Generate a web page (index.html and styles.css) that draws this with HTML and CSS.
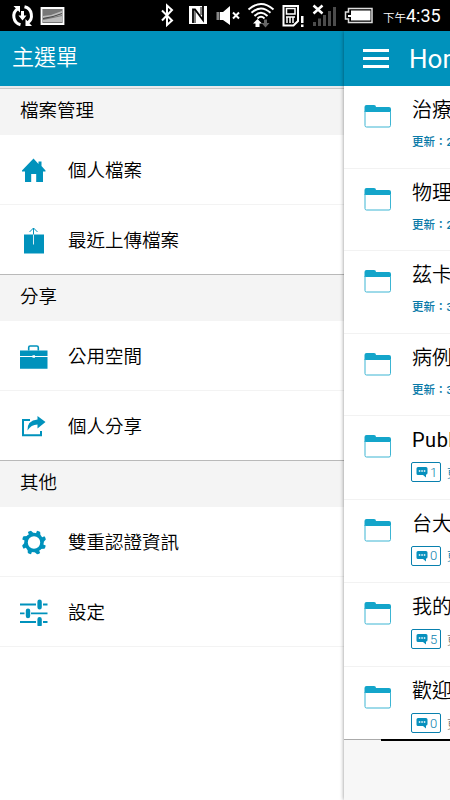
FILE: index.html
```
<!DOCTYPE html>
<html lang="zh-Hant">
<head>
  <meta charset="UTF-8">
  <meta name="viewport" content="width=device-width, initial-scale=1.0">
  <title>主選單</title>
  <link rel="stylesheet" href="styles.css">
</head>
<body>

  <!-- shared icons -->
  <svg class="defs" width="0" height="0">
    <symbol id="folder" viewBox="0 0 28 24">
      <path d="M.5 8V3Q.5 1 2.500 1h7.500q2 0 2 2h13Q27 3 27 5v3z" fill="#14a5ca"/>
      <path d="M1 7v14.500q0 1.500 1.500 1.500h22.500q1.500 0 1.500-1.500V7" fill="none" stroke="#3db5d3"/>
    </symbol>
    <symbol id="comment" viewBox="0 0 12 12">
      <path d="M2 1h8q1.500 0 1.500 1.500V7q0 1.500-1.500 1.500v3L7 9H2Q.5 9 .5 7.500V2.500Q.5 1 2 1z" fill="#0790bd"/>
      <path d="M2.800 4.200h1.500v1.500H2.800zM5.300 4.200h1.500v1.500H5.300zM7.800 4.200h1.500v1.500H7.800z" fill="#fff"/>
    </symbol>
  </svg>

  <div class="statusbar">
    <svg class="status-icons" width="380" height="31" viewBox="0 0 380 31">
      <!-- sync -->
      <g fill="none" stroke="#fff" stroke-width="3">
        <path d="M18 8.500A9 9 0 0 0 20.500 24.800"/>
        <path d="M24.500 6.800A9 9 0 0 1 27.500 23"/>
        <path d="M22.500 11v6"/>
      </g>
      <path d="M13.500 6H20v6.500zM25.500 19v7H32zM18.500 15.500h8l-4 5z" fill="#fff"/>
      <!-- picture -->
      <path d="M41.500 8h22v16h-22z" fill="#777" stroke="#fff" stroke-width="1.800"/>
      <path d="M43 16l8-1 11-4v4l-9 2-10 1zM43 20l10-2 9-2v6H43z" fill="#bbb"/>
      <path d="M43 18.500l10-2 9-3" fill="none" stroke="#444"/>
      <!-- bluetooth -->
      <path d="M162 10.500l10 10-5 4.500V5.500l5 4.500-10 10.500" fill="none" stroke="#fff" stroke-width="2"/>
      <!-- nfc -->
      <path d="M189 6h18v18h-18z" fill="#fff"/>
      <path d="M193 23V9.500h2l8 10.500V6" fill="none" stroke="#000" stroke-width="1.800"/>
      <path d="M195 10v13M201 7v8" fill="none" stroke="#000" stroke-width="1"/>
      <!-- muted speaker -->
      <path d="M216.500 12h3v8h-3z" fill="#888"/>
      <path d="M220 12h3l7-6v19l-7-5h-3z" fill="#fff"/>
      <path d="M233 12.500l6 6M239 12.500l-6 6" stroke="#fff" stroke-width="2"/>
      <!-- wifi -->
      <g fill="none" stroke="#fff" stroke-width="1.900">
        <path d="M248.500 9.500Q261 -1.500 273.500 9.500"/>
        <path d="M251.500 12.800Q261 4 270.500 12.800"/>
        <path d="M254.500 16Q261 9.500 267.500 16"/>
        <path d="M257.500 18.500Q261 15 264.500 18.500"/>
      </g>
      <path d="M257.500 19l4.500 4.500h-2.500V27h-4v-3.500h-2.500z" fill="#fff"/>
      <path d="M264 19.500h3V23h2.500l-4 4.500-4-4.500h2.500z" fill="#666"/>
      <!-- sim card -->
      <path d="M283.500 6H298v15l-4.500 4.500h-10z" fill="none" stroke="#fff" stroke-width="2"/>
      <path d="M286.500 8.500h8.500v5.500h-8.500z" fill="none" stroke="#fff" stroke-width="1.500"/>
      <path d="M287 17v6M290 17v6M293 17v6M286 17h9" stroke="#fff" stroke-width="1.500"/>
      <path d="M301 16h2.500v7H301zM301 24.500h2.500V27H301z" fill="#fff"/>
      <!-- signal -->
      <path d="M313 22h3v4h-3zM318 18.500h3V26h-3zM323 15h3v11h-3zM328 11h3v15h-3zM333 7h3v19h-3z" fill="#4c4c4c"/>
      <path d="M313.500 5.500l9 8M322.500 5.500l-9 8" stroke="#fff" stroke-width="2.500"/>
      <!-- battery -->
      <path d="M348.500 8.500H372v14h-23.500v-3.500h-3v-7h3z" fill="none" stroke="#ddd" stroke-width="1.500"/>
      <path d="M351 10.500h19.500v10H351V17h-3v-2h3z" fill="#fff"/>
    </svg>
    <div class="clock"><span class="ampm">下午</span><span class="time">4:35</span></div>
  </div>

  <div class="screen">
    <nav class="menu">
      <h1 class="menu-title">主選單</h1>
      <h2 class="section first">檔案管理</h2>
      <ul>
        <li>
          <svg width="28" height="28" viewBox="0 0 28 28" fill="#0092bc">
            <path d="M13.500 2.500L2 14.500v1h3V26h6.200v-8h5V26H23V15.500h2.500v-1L21.500 10V5.500h-3V8z"/>
          </svg>
          <span>個人檔案</span>
        </li>
        <li>
          <svg width="28" height="28" viewBox="0 0 28 28" fill="none">
            <path d="M4 8.500h20v19H4z" fill="#0092bc"/>
            <path d="M13.500 2v7M9.500 6L13.500 2l4 4" stroke="#0092bc"/>
            <path d="M13.500 8.500v10" stroke="#d8eef5"/>
          </svg>
          <span>最近上傳檔案</span>
        </li>
      </ul>
      <h2 class="section">分享</h2>
      <ul>
        <li>
          <svg width="28" height="28" viewBox="0 0 28 28">
            <path d="M8.700 8.500V5.500Q8.700 4 10.200 4h6.600q1.500 0 1.500 1.500v3" fill="none" stroke="#0092bc" stroke-width="1.600"/>
            <path d="M0 8.500h27.500V14H15v-.7h-2.500v.7H0zM0 15h12.500v.8H15V15h12.500v11.800H0z" fill="#0092bc"/>
          </svg>
          <span>公用空間</span>
        </li>
        <li>
          <svg width="28" height="28" viewBox="0 0 28 28">
            <path d="M10 8H3v15.300h18V19" fill="none" stroke="#0092bc" stroke-width="2"/>
            <path d="M17.500 4l8 6-8 6.500v-4Q11 12.500 7.500 18.500 7 8.500 17.500 7.500z" fill="#0092bc"/>
          </svg>
          <span>個人分享</span>
        </li>
      </ul>
      <h2 class="section">其他</h2>
      <ul>
        <li>
          <svg width="28" height="28" viewBox="0 0 28 28">
            <circle cx="14" cy="14.500" r="8" fill="none" stroke="#0092bc" stroke-width="3.600"/>
            <g fill="#0092bc">
              <path id="tooth" d="M15.500 6.500L17 2.800q2 .2 3.200 1.200L20.500 9z"/>
              <use href="#tooth" transform="rotate(45 14 14.500)"/>
              <use href="#tooth" transform="rotate(90 14 14.500)"/>
              <use href="#tooth" transform="rotate(135 14 14.500)"/>
              <use href="#tooth" transform="rotate(180 14 14.500)"/>
              <use href="#tooth" transform="rotate(225 14 14.500)"/>
              <use href="#tooth" transform="rotate(270 14 14.500)"/>
              <use href="#tooth" transform="rotate(315 14 14.500)"/>
            </g>
          </svg>
          <span>雙重認證資訊</span>
        </li>
        <li>
          <svg width="28" height="28" viewBox="0 0 28 28">
            <path d="M0 6.500H16M23 6.500h4.500M0 15.300H4.500M11 15.300h16.500M0 24H16M23 24h4.500" stroke="#0092bc" stroke-width="1.800"/>
            <path d="M19.600 3.800v5.400M8 12.600v5.400M19.600 21.300v5.400" stroke="#0092bc" stroke-width="4.400" stroke-linecap="round"/>
          </svg>
          <span>設定</span>
        </li>
      </ul>
    </nav>

    <main class="panel">
      <header class="panel-header">
        <div class="hamburger"><i></i><i></i><i></i></div>
        <span>Home</span>
      </header>
      <div class="files">
        <div class="file">
          <svg class="folder"><use href="#folder"/></svg>
          <div class="info"><p class="name">治療</p><p class="date">更新：2</p></div>
        </div>
        <div class="file">
          <svg class="folder"><use href="#folder"/></svg>
          <div class="info"><p class="name">物理</p><p class="date">更新：2</p></div>
        </div>
        <div class="file">
          <svg class="folder"><use href="#folder"/></svg>
          <div class="info"><p class="name">茲卡</p><p class="date">更新：3</p></div>
        </div>
        <div class="file">
          <svg class="folder"><use href="#folder"/></svg>
          <div class="info"><p class="name">病例</p><p class="date">更新：3</p></div>
        </div>
        <div class="file tall">
          <svg class="folder"><use href="#folder"/></svg>
          <div class="info"><p class="name latin">Publ</p>
            <div class="meta"><span class="badge"><svg><use href="#comment"/></svg>1</span><span>更</span></div></div>
        </div>
        <div class="file tall">
          <svg class="folder"><use href="#folder"/></svg>
          <div class="info"><p class="name">台大</p>
            <div class="meta"><span class="badge"><svg><use href="#comment"/></svg>0</span><span>更</span></div></div>
        </div>
        <div class="file tall">
          <svg class="folder"><use href="#folder"/></svg>
          <div class="info"><p class="name">我的</p>
            <div class="meta old"><span class="badge"><svg><use href="#comment"/></svg>5</span><span>更</span></div></div>
        </div>
        <div class="file tall">
          <svg class="folder"><use href="#folder"/></svg>
          <div class="info"><p class="name">歡迎</p>
            <div class="meta old"><span class="badge"><svg><use href="#comment"/></svg>0</span><span>更</span></div></div>
        </div>
      </div>
      <div class="bottom"><div class="indicator"></div></div>
    </main>
  </div>

</body>
</html>
```
FILE: styles.css
```
* {
  box-sizing: border-box;
}

body {
  margin: 0;
  width: 450px;
  height: 800px;
  overflow: hidden;
  background: #fff;
  color: #000;
  font-family: Roboto, "Noto Sans CJK TC", sans-serif;
  font-weight: 350;
}

h1, h2, ul, p {
  margin: 0;
  padding: 0;
  font-weight: 350;
}

.defs {
  display: none;
}

/* status bar */
.statusbar {
  display: flex;
  height: 31px;
  background: #000;
  color: #fff;
}

.status-icons {
  flex: none;
}

.clock {
  display: flex;
  align-items: baseline;
  padding-left: 3px;
  line-height: 32px;
  white-space: nowrap;
}

.ampm {
  font-size: 11.5px;
}

.time {
  font-size: 18px;
  font-weight: 400;
}

.screen {
  display: flex;
  height: 769px;
}

/* left menu */
.menu {
  flex: none;
  width: 344px;
}

.menu-title {
  height: 55px;
  padding-left: 12px;
  background: #0092bc;
  color: #fff;
  font-size: 22px;
  line-height: 53px;
}

.section {
  height: 47px;
  padding-left: 20px;
  border-top: 1px solid #b9b9b9;
  background: #f4f4f4;
  font-size: 18.5px;
  line-height: 44px;
}

.section.first {
  height: 49px;
  border-top: 2px solid #e9eaeb;
  box-shadow: inset 0 1px #c8c8c8;
  line-height: 46px;
}

.menu li {
  display: flex;
  align-items: center;
  gap: 20px;
  height: 70px;
  padding: 0 0 0 20px;
  border-bottom: 1px solid #f3f3f3;
  font-size: 18.5px;
}

.menu li span {
  padding-bottom: 2px;
}

.menu ul:not(:last-child) li:last-child {
  height: 69px;
  border-bottom: none;
}

/* file list */
.panel {
  display: flex;
  flex-direction: column;
  flex: none;
  width: 106px;
  background: #fff;
  box-shadow: 0 0 4px rgba(0, 0, 0, 0.45);
  white-space: nowrap;
  overflow: hidden;
}

.panel-header {
  display: flex;
  align-items: center;
  gap: 20px;
  height: 55px;
  padding-left: 19px;
  background: #0092bc;
  color: #fff;
  font-size: 26px;
  font-weight: 400;
}

.hamburger {
  display: flex;
  flex-direction: column;
  gap: 5px;
}

.hamburger i {
  width: 26px;
  height: 3px;
  background: #fff;
}

.files {
  height: 653px;
  overflow: hidden;
}

.file {
  display: flex;
  gap: 20px;
  height: 82.5px;
  padding-left: 20px;
  border-bottom: 1px solid #f2f2f2;
}

.file.tall {
  height: 83.7px;
}

.folder {
  flex: none;
  width: 28px;
  height: 24px;
  margin-top: 18px;
}

.info {
  padding-top: 9px;
}

.name {
  height: 30px;
  font-size: 20px;
  line-height: 31px;
}

.latin {
  font-weight: 400;
  letter-spacing: 0.5px;
}

.date {
  color: #0a7aa8;
  font-size: 11.5px;
  font-weight: 500;
  line-height: 34px;
}

.meta {
  display: flex;
  align-items: center;
  gap: 6px;
  margin: 7px 0 0 -1px;
  color: #0a7aa8;
  font-size: 12px;
}

.meta.old {
  color: #777;
}

.badge {
  display: flex;
  align-items: center;
  gap: 2px;
  width: 30px;
  height: 20px;
  padding-left: 4px;
  border: 1px solid #0880ae;
  border-radius: 2px;
  color: #0880ae;
  font-size: 13px;
}

.badge svg {
  width: 12px;
  height: 12px;
}

.bottom {
  flex: 1;
  border-top: 1px solid #aaa;
  background: #f7f7f7;
}

.indicator {
  height: 2px;
  margin: -1px 0 0 37px;
  background: #000;
}
```
